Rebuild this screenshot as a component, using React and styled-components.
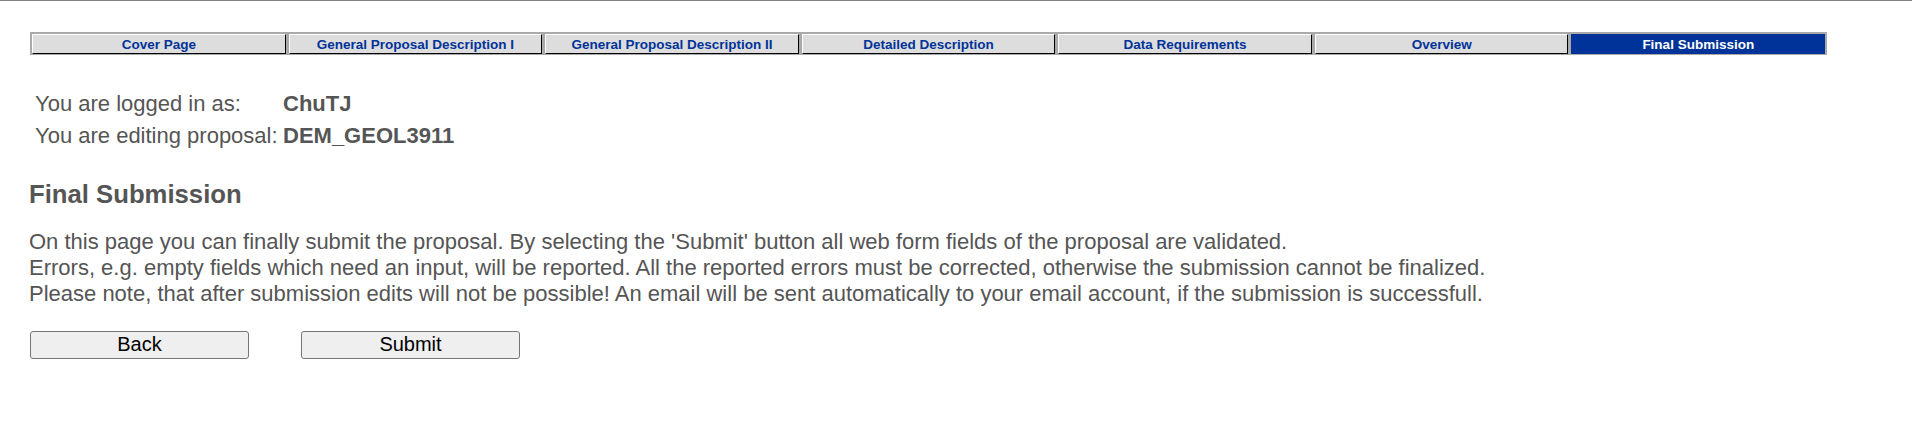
import styled, { createGlobalStyle } from "styled-components";

const GlobalStyle = createGlobalStyle`
  html, body {
    margin: 0;
    padding: 0;
    background: #ffffff;
  }
  body {
    font-family: "Liberation Sans", Arial, sans-serif;
    color: #555555;
  }
`;

const TopRule = styled.div`
  height: 1px;
  background: #808080;
`;

const Page = styled.div`
  padding: 31px 0 0 29px;
`;

const TabBar = styled.div`
  display: flex;
  gap: 3px;
  width: 1793px;
  margin-left: 1px;
  padding: 2px 2px 1px 2px;
  background: #aaaaaa;
`;

const Tab = styled.div`
  flex: 1;
  height: 18px;
  display: flex;
  align-items: center;
  justify-content: center;
  font-size: 13.5px;
  font-weight: 700;
  background: ${(p) => (p.$active ? "#003399" : "#dddddd")};
  color: ${(p) => (p.$active ? "#ffffff" : "#003399")};
  border-top: 1px solid ${(p) => (p.$active ? "#003399" : "#ffffff")};
  border-left: 1px solid ${(p) => (p.$active ? "#003399" : "#ffffff")};
  border-bottom: 1px solid ${(p) => (p.$active ? "#003399" : "#000000")};
  border-right: 1px solid ${(p) => (p.$active ? "#003399" : "#000000")};
  white-space: nowrap;
`;

const Info = styled.div`
  display: grid;
  grid-template-columns: 248px auto;
  margin: 33px 0 0 6px;
  font-size: 22px;
  line-height: 31.5px;
`;

const Value = styled.span`
  font-weight: 700;
`;

const Heading = styled.h3`
  margin: 29px 0 0;
  font-size: 25.7px;
  font-weight: 700;
  line-height: 29.6px;
`;

const Text = styled.p`
  margin: 19px 0 0;
  font-size: 22px;
  line-height: 26px;
`;

const Buttons = styled.div`
  display: flex;
  gap: 52px;
  margin: 24px 0 0 1px;
`;

const Button = styled.button`
  width: 219px;
  height: 28px;
  padding: 0;
  border: 1px solid #767676;
  border-radius: 3px;
  background: #efefef;
  color: #000000;
  font-family: "Liberation Sans", Arial, sans-serif;
  font-size: 20px;
  cursor: pointer;
`;

const tabs = [
  "Cover Page",
  "General Proposal Description I",
  "General Proposal Description II",
  "Detailed Description",
  "Data Requirements",
  "Overview",
  "Final Submission",
];

export default function App() {
  return (
    <>
      <GlobalStyle />
      <TopRule />
      <Page>
        <TabBar>
          {tabs.map((t) => (
            <Tab key={t} $active={t === "Final Submission"}>
              {t}
            </Tab>
          ))}
        </TabBar>
        <Info>
          <span>You are logged in as:</span>
          <Value>ChuTJ</Value>
          <span>You are editing proposal:</span>
          <Value>DEM_GEOL3911</Value>
        </Info>
        <Heading>Final Submission</Heading>
        <Text>
          On this page you can finally submit the proposal. By selecting the
          'Submit' button all web form fields of the proposal are validated.
          <br />
          Errors, e.g. empty fields which need an input, will be reported. All
          the reported errors must be corrected, otherwise the submission
          cannot be finalized.
          <br />
          Please note, that after submission edits will not be possible! An
          email will be sent automatically to your email account, if the
          submission is successfull.
        </Text>
        <Buttons>
          <Button>Back</Button>
          <Button>Submit</Button>
        </Buttons>
      </Page>
    </>
  );
}
